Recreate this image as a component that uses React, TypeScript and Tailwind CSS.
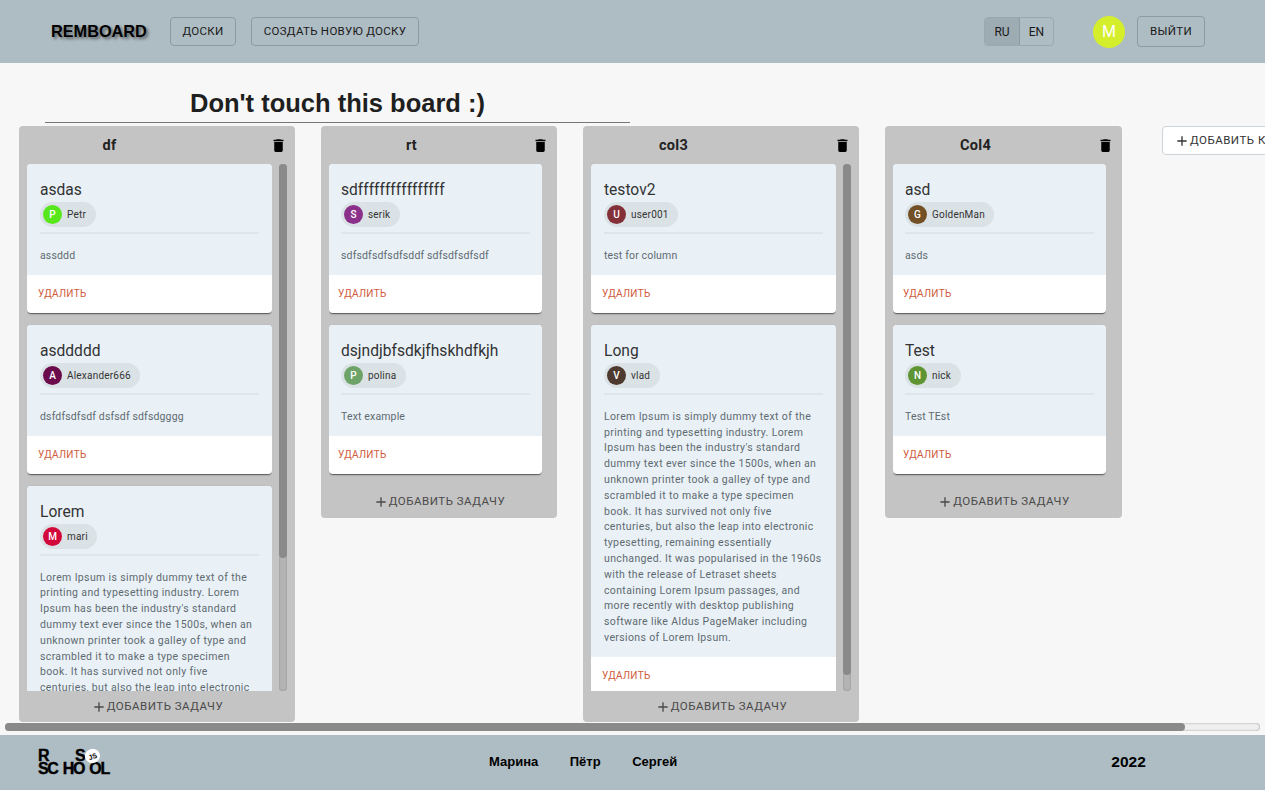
const LOREM =
  "Lorem Ipsum is simply dummy text of the printing and typesetting industry. Lorem Ipsum has been the industry's standard dummy text ever since the 1500s, when an unknown printer took a galley of type and scrambled it to make a type specimen book. It has survived not only five centuries, but also the leap into electronic typesetting, remaining essentially unchanged. It was popularised in the 1960s with the release of Letraset sheets containing Lorem Ipsum passages, and more recently with desktop publishing software like Aldus PageMaker including versions of Lorem Ipsum.";

interface Task {
  title: string;
  user: string;
  color: string;
  text: string;
}

interface Column {
  title: string;
  width: string;
  cardWidth: string;
  inset: string;
  actionInset: string;
  height: string;
  thumb?: number;
  tasks: Task[];
}

const columns: Column[] = [
  {
    title: "df",
    width: "w-[276px]",
    cardWidth: "w-[245px]",
    inset: "px-[13px]",
    actionInset: "px-[11px]",
    height: "h-[596px]",
    thumb: 394,
    tasks: [
      { title: "asdas", user: "Petr", color: "bg-[#58e71d]", text: "assddd" },
      { title: "asddddd", user: "Alexander666", color: "bg-[#6c0b4b]", text: "dsfdfsdfsdf dsfsdf sdfsdgggg" },
      { title: "Lorem", user: "mari", color: "bg-[#d20a3c]", text: LOREM },
    ],
  },
  {
    title: "rt",
    width: "w-[236px]",
    cardWidth: "w-[213px]",
    inset: "px-[12px]",
    actionInset: "px-[9px]",
    height: "",
    tasks: [
      { title: "sdffffffffffffffff", user: "serik", color: "bg-[#8a2f8a]", text: "sdfsdfsdfsdfsddf sdfsdfsdfsdf" },
      { title: "dsjndjbfsdkjfhskhdfkjh", user: "polina", color: "bg-[#6ea368]", text: "Text example" },
    ],
  },
  {
    title: "col3",
    width: "w-[276px]",
    cardWidth: "w-[245px]",
    inset: "px-[13px]",
    actionInset: "px-[11px]",
    height: "h-[596px]",
    thumb: 511,
    tasks: [
      { title: "testov2", user: "user001", color: "bg-[#843038]", text: "test for column" },
      { title: "Long", user: "vlad", color: "bg-[#4e3a2e]", text: LOREM },
    ],
  },
  {
    title: "Col4",
    width: "w-[237px]",
    cardWidth: "w-[213px]",
    inset: "px-[12px]",
    actionInset: "px-[10px]",
    height: "",
    tasks: [
      { title: "asd", user: "GoldenMan", color: "bg-[#734f25]", text: "asds" },
      { title: "Test", user: "nick", color: "bg-[#5e9431]", text: "Test TEst" },
    ],
  },
];

function TrashIcon() {
  return (
    <svg viewBox="0 0 24 24" className="h-[17px] w-[17px] fill-black">
      <path d="M6 19c0 1.1.9 2 2 2h8c1.1 0 2-.9 2-2V7H6v12zM19 4h-3.5l-1-1h-5l-1 1H5v2h14V4z" />
    </svg>
  );
}

function PlusIcon() {
  return (
    <svg viewBox="0 0 24 24" className="h-[16px] w-[16px] fill-current">
      <path d="M19 13h-6v6h-2v-6H5v-2h6V5h2v6h6v2z" />
    </svg>
  );
}

function HeaderButton({ label, className }: { label: string; className: string }) {
  return (
    <button className={`flex items-center justify-center rounded border border-[#8b9ba3] text-[11.5px] uppercase tracking-[0.3px] text-[#1a1a1a] ${className}`}>
      {label}
    </button>
  );
}

function TaskCard({ task, column }: { task: Task; column: Column }) {
  const long = task.text.length > 100;
  return (
    <div className={`mb-3 shrink-0 overflow-hidden rounded bg-white shadow-[0_2px_1px_-1px_rgba(0,0,0,0.4),0_1px_1px_0_rgba(0,0,0,0.14),0_1px_3px_0_rgba(0,0,0,0.12)] ${column.cardWidth}`}>
      <div className={`bg-[#e9f1f7] pb-[11px] pt-[14px] ${column.inset}`}>
        <div className="text-[15.6px] leading-[24px] text-[#333]">{task.title}</div>
        <div className="flex">
          <div className="flex h-[25px] items-center rounded-full bg-[#dbe2e5] pl-[3px] pr-[9.5px]">
            <div className={`flex h-[19px] w-[19px] items-center justify-center rounded-full text-[10px] font-medium text-white ${task.color}`}>
              {task.user[0].toUpperCase()}
            </div>
            <span className="ml-[5px] text-[10px] tracking-[0.2px] text-[#333]">{task.user}</span>
          </div>
        </div>
        <div className="mt-[5px] h-[2px] bg-[#dfe6ea]" />
        <p className={`mt-[14px] text-[10.5px] leading-[15.8px] text-[#5f6a70] ${long ? "tracking-[0.36px]" : "tracking-[0.15px]"}`}>
          {task.text}
        </p>
      </div>
      <div className={`flex h-[38px] items-center text-[10px] uppercase tracking-[0.3px] text-[#cf5a3a] ${column.actionInset}`}>Удалить</div>
    </div>
  );
}

function BoardColumn({ column }: { column: Column }) {
  return (
    <div className={`flex shrink-0 flex-col rounded bg-[#c4c4c4] pl-[8px] ${column.width} ${column.height}`}>
      <div className="flex h-[38px] shrink-0 items-center pr-[8px]">
        <div className="w-[165px] pt-[1px] text-center text-[14.5px] font-bold tracking-[0.3px] text-[#222]">{column.title}</div>
        <div className="ml-auto">
          <TrashIcon />
        </div>
      </div>
      <div className={`flex shrink-0 ${column.thumb ? "h-[527px]" : ""}`}>
        <div className="flex flex-col overflow-hidden">
          {column.tasks.map((task) => (
            <TaskCard key={task.title} task={task} column={column} />
          ))}
        </div>
        {column.thumb && (
          <div className="ml-[7px] h-full w-[8px] rounded-full bg-[#b4b4b4] shadow-[inset_0_0_2px_#8a8a8a]">
            <div className="w-full rounded-full bg-[#8a8a8a]" style={{ height: column.thumb }} />
          </div>
        )}
      </div>
      <div className="-ml-[8px] flex h-[32px] items-center justify-center text-[11.5px] uppercase tracking-[0.5px] text-[#4a4a4a]">
        <PlusIcon />
        Добавить задачу
      </div>
    </div>
  );
}

export default function App() {
  return (
    <div className="flex h-[790px] flex-col overflow-hidden bg-[#f7f7f7] font-['Roboto',sans-serif]">
      <header className="flex h-[63px] shrink-0 items-center bg-[#aebcc3]">
        <div className="ml-[51px] w-[119px] font-['Liberation_Sans',sans-serif] text-[16.3px] font-bold text-black [text-shadow:2px_2px_3px_rgba(0,0,0,0.5)]">
          REMBOARD
        </div>
        <HeaderButton label="Доски" className="h-[29px] w-[66px]" />
        <HeaderButton label="Создать новую доску" className="ml-[15px] h-[29px] w-[168px]" />
        <div className="ml-[565px] flex h-[29px] w-[70px] overflow-hidden rounded border border-[#9aa9b1] text-[12px] text-[#1a1a1a]">
          <div className="flex w-[35px] items-center justify-center border-r border-[#8b9ba3] bg-[#9dabb3]">RU</div>
          <div className="flex flex-1 items-center justify-center">EN</div>
        </div>
        <div className="ml-[39px] flex h-[32px] w-[32px] items-center justify-center rounded-full bg-[#d4ee2b] text-[16px] text-white">M</div>
        <HeaderButton label="Выйти" className="ml-[12px] h-[31px] w-[68px]" />
      </header>

      <main className="flex min-h-0 flex-1 flex-col">
        <div className="ml-[45px] mt-[25px] w-[585px] shrink-0 border-b border-[#777] pb-[3px] text-center font-['Liberation_Sans',sans-serif] text-[25.5px] font-bold leading-[31px] text-[#1f1f1f]">
          Don't touch this board :)
        </div>
        <div className="mt-[3px] flex min-h-0 flex-1 items-start gap-[26px] overflow-hidden pl-[19px]">
          {columns.map((column) => (
            <BoardColumn key={column.title} column={column} />
          ))}
          <button className="ml-[14px] flex h-[29px] w-[162px] shrink-0 items-center rounded border border-[#cdd5da] bg-white pl-[11px] text-[11.5px] uppercase tracking-[0.5px] text-[#333]">
            <PlusIcon />
            Добавить колонку
          </button>
        </div>
        <div className="mx-[5px] mb-[4px] h-[8px] shrink-0 rounded-full bg-[#efefef] shadow-[inset_0_0_2px_#8a8a8a]">
          <div className="h-full w-[1180px] rounded-full bg-[#8a8a8a]" />
        </div>
      </main>

      <footer className="flex h-[55px] shrink-0 items-center bg-[#aebcc3] pb-[2px] text-black">
        <div className="relative ml-[38px] w-[71px] font-['Liberation_Sans',sans-serif] text-[16px] font-bold leading-[13px] tracking-[-1.3px] [word-spacing:2px] [-webkit-text-stroke:0.4px_black]">
          <div className="flex">
            <span className="w-[37px]">R</span>
            <span>S</span>
          </div>
          <div className="whitespace-nowrap">SC HO OL</div>
          <div className="absolute left-[47px] top-0 flex h-[14px] w-[15px] rotate-[-20deg] items-center justify-center rounded-full bg-white text-[7px] tracking-normal [-webkit-text-stroke:0]">
            JS
          </div>
        </div>
        <div className="ml-[380px] flex gap-[31.5px] font-['Liberation_Sans',sans-serif] text-[13px] font-bold">
          <span>Марина</span>
          <span>Пётр</span>
          <span>Сергей</span>
        </div>
        <div className="ml-[434px] font-['Liberation_Sans',sans-serif] text-[15.5px] font-bold">2022</div>
      </footer>
    </div>
  );
}
